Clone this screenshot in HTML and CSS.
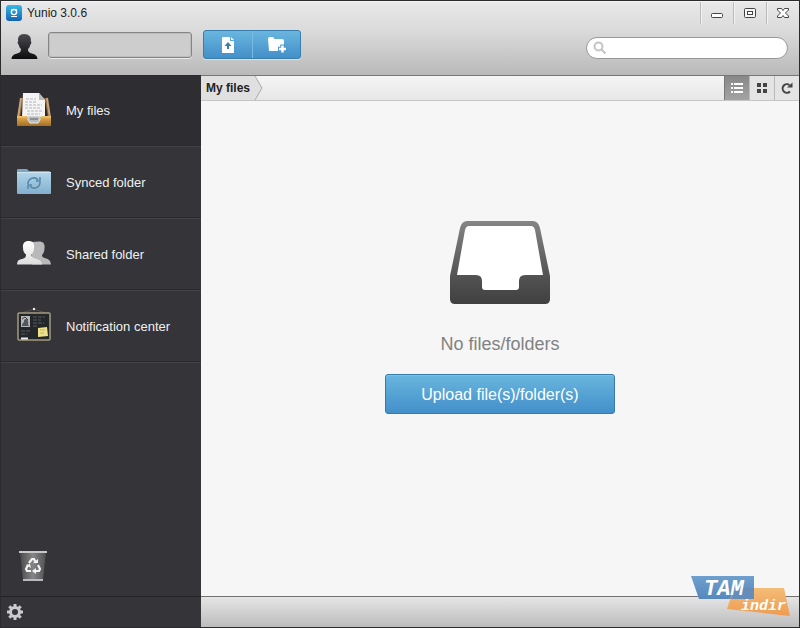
FILE: index.html
```html
<!DOCTYPE html>
<html lang="en">
<head>
<meta charset="utf-8">
<title>Yunio 3.0.6</title>
<link rel="stylesheet" href="styles.css">
</head>
<body>
<div class="window">
  <header class="header">
    <div class="titlebar">
      <svg class="app-logo" width="16" height="16" viewBox="0 0 16 16" aria-hidden="true">
        <defs><linearGradient id="logo" x2="0" y2="1"><stop offset="0" stop-color="#38b9e8"/><stop offset="1" stop-color="#1263b4"/></linearGradient></defs>
        <rect width="16" height="16" rx="3" fill="url(#logo)"/>
        <circle cx="8" cy="7" r="2.6" fill="none" stroke="#fff" stroke-width="1.4"/>
        <path d="M5 4.700h6M5 11.5h6" stroke="#fff" stroke-width="1.2"/>
      </svg>
      <h1 class="title">Yunio 3.0.6</h1>
      <div class="window-controls">
        <button type="button" aria-label="Minimize"><svg width="14" height="14" viewBox="0 0 14 14"><rect x="1.5" y="7.5" width="11" height="4" rx="1" fill="#fff" stroke="#444"/></svg></button>
        <button type="button" aria-label="Maximize"><svg width="14" height="14" viewBox="0 0 14 14"><rect x="1.5" y="2.5" width="11" height="9" rx="1" fill="#f4f4f4" stroke="#444"/><rect x="4.5" y="5.500" width="5" height="3" fill="#fff" stroke="#444"/></svg></button>
        <button type="button" aria-label="Close"><svg width="14" height="14" viewBox="0 0 14 14"><path d="M1.500 2.500h4L7 4.500l1.500-2h4V4L9.500 7l3 3v1.500h-4L7 9.500l-1.500 2h-4V10l3-3-3-3z" fill="#fff" stroke="#444"/></svg></button>
      </div>
    </div>
    <div class="toolbar">
      <svg class="avatar" width="27" height="27" viewBox="0 0 27 27" aria-hidden="true">
        <defs><linearGradient id="person" x2="0" y2="1"><stop offset="0" stop-color="#4a4a50"/><stop offset="1" stop-color="#0d0d10"/></linearGradient></defs>
        <path d="M13 1c5 0 7.500 3 6.800 7 1 1 .6 3-.6 4-.4 2-1.200 3-2.200 4 .2 3 1 3.500 4 4.500 3.500 1.200 5 2 5.500 5.500H.5c.5-3.500 2-4.300 5.500-5.500 3-1 3.800-1.500 4-4.500-1-1-1.800-2-2.200-4-1.200-1-1.600-3-.6-4C6.500 4 8.500 1 13 1z" fill="url(#person)"/>
      </svg>
      <input class="name-field" type="text" aria-label="User name">
      <div class="actions">
        <button type="button" aria-label="Upload file"><svg width="20" height="20" viewBox="0 0 20 20"><path d="M4 2h8v4h4v12H4z" fill="#fff"/><path d="M13 2l3 3h-3z" fill="#fff"/><path d="M10 7l3.500 4H11v3H9v-3H6.500z" fill="#3d7fac"/></svg></button>
        <button type="button" aria-label="New folder"><svg width="20" height="20" viewBox="0 0 20 20"><path d="M1 4q0-2 2-2h3l1.500 2H15q2 0 2 2v10H2z" fill="#fff"/><path d="M15.500 9.500v9M11 14h9" stroke="#4b98cb" stroke-width="4.500"/><path d="M15.500 10.500v7M12 14h7" stroke="#fff" stroke-width="2.400"/></svg></button>
      </div>
      <div class="search">
        <svg width="14" height="14" viewBox="0 0 14 14" aria-hidden="true"><circle cx="5.500" cy="5.500" r="4" fill="none" stroke="#c4c4c4" stroke-width="2"/><path d="M8.500 8.500l4 4" stroke="#c4c4c4" stroke-width="2"/></svg>
        <input type="search" aria-label="Search">
      </div>
    </div>
  </header>
  <div class="content">
    <aside class="sidebar">
      <nav class="nav">
        <a class="nav-item active" href="#files">
          <svg width="36" height="38" viewBox="0 0 36 38" aria-hidden="true">
            <defs><linearGradient id="wood" x2="0" y2="1"><stop offset="0" stop-color="#e9b258"/><stop offset="1" stop-color="#a56d20"/></linearGradient></defs>
            <path d="M5 6h26l4 20H1z" fill="#8b633a"/><path d="M7 9h22l3 17H4z" fill="#32251c"/>
            <path d="M5 6l-3 20M31 6l3 20" stroke="#c7a47c" stroke-width="2"/>
            <path d="M7 1h16l6 7v17H6z" fill="#f4f4f4"/><path d="M23 1v7h6z" fill="#b8babd"/>
            <path d="M10 7h10M9 10h11M9 13h17M9 16h15M11 19h15M11 22h13" stroke="#b4b7bb" stroke-dasharray="3 1"/>
            <path d="M1 24h10l2 5h10l2-5h10v10H1z" fill="url(#wood)"/>
            <path d="M12 24h12v4l-2 3h-8l-2-3z" fill="#b9bcc0" stroke="#e8e8e8"/><path d="M14 26h8v2h-8z" fill="#8b9095"/>
            <path d="M1 25h10M25 25h10" stroke="#f1ca7f"/>
          </svg>
          <span>My files</span>
        </a>
        <a class="nav-item" href="#synced">
          <svg width="36" height="38" viewBox="0 0 36 38" aria-hidden="true">
            <defs><linearGradient id="folder" x2="0" y2="1"><stop offset="0" stop-color="#b2d6eb"/><stop offset="1" stop-color="#83b0cd"/></linearGradient></defs>
            <path d="M1 7q0-1 1-1h9l2 2h20q1 0 1 1v7H1z" fill="#7aa6c1"/>
            <rect x="1" y="9" width="34" height="22" rx="1" fill="url(#folder)"/>
            <path d="M1 9.500h34" stroke="#cce5f2"/>
            <path d="M12 21c0-6 7-8 10-4M24 19c0 6-7 8-10 4" fill="none" stroke="#5888aa" stroke-width="1.600"/><path d="M20 18h4v-4M16 22h-4v4" fill="none" stroke="#5888aa" stroke-width="1.500"/>
          </svg>
          <span>Synced folder</span>
        </a>
        <a class="nav-item" href="#shared">
          <svg width="36" height="38" viewBox="0 0 36 38" aria-hidden="true">
            <defs><linearGradient id="people" x2="0" y2="1"><stop offset="0" stop-color="#fff"/><stop offset="1" stop-color="#ddd"/></linearGradient></defs>
            <path d="M23 6.500c5 0 6 3 5.500 7 0 3-1 5-2.500 6.500 0 2 1 2.500 4 3.500 3 .8 4.500 2 5 6H16V7z" fill="#b9b9b9"/>
            <path d="M12.500 6c5 0 6 3 5.500 7 0 3-1 5-2.500 6.500 0 3 1 3 5 4.500 3.500 1 5 2 5.500 5.500H1c.5-4 1.500-4.700 5-5.500 3-1 4-1.500 4-4.500C8 18 7 16 7 13c-.5-4 1-7 5.500-7z" fill="url(#people)"/>
          </svg>
          <span>Shared folder</span>
        </a>
        <a class="nav-item" href="#notifications">
          <svg width="36" height="38" viewBox="0 0 36 38" aria-hidden="true">
            <path d="M6 6l12-4 12 4" fill="none" stroke="#55504a"/><circle cx="18" cy="2" r="1.200" fill="#eee"/>
            <rect x="2" y="6" width="32" height="27" rx="1" fill="#24272a" stroke="#a29a80" stroke-width="1.500"/>
            <rect x="5" y="9" width="9" height="11" fill="#b4b7b9"/><path d="M6 19c0-3 2-3 2-5s3-3 4 0-1 2 1 5z" fill="#54585b"/><path d="M6 12l3-2 3 3" stroke="#444" fill="none"/>
            <path d="M17 10h12M17 13h8M17 16h11M17 19h5M5 24h9M5 27h6" stroke="#555c63" stroke-dasharray="4 1"/>
            <path d="M22 21l9-1 1 9-10 1z" fill="#eee18a"/><path d="M24 23h5M24 26h4" stroke="#c0b566"/><path d="M5 31.500h7" stroke="#eee" stroke-width="2"/>
          </svg>
          <span>Notification center</span>
        </a>
      </nav>
      <a class="trash" href="#trash" aria-label="Trash">
        <svg width="30" height="34" viewBox="0 0 30 34" aria-hidden="true">
          <defs><linearGradient id="bin"><stop offset="0" stop-color="#4b4b4d"/><stop offset=".5" stop-color="#858587"/><stop offset="1" stop-color="#505052"/></linearGradient></defs>
          <path d="M2 3h26l-3 28H5z" fill="url(#bin)"/><path d="M1 3h28" stroke="#c9c9c9" stroke-width="2"/><path d="M5 31h20" stroke="#bbb" stroke-width="2"/>
          <path d="M11 14l3-4h2l2 4M20 16l2 4-1 2h-4M13 22H9l-1-2 2-4" fill="none" stroke="#f3f3f3" stroke-width="2.200"/><path d="M15 14h5v-4zM18 19v6l-4-3zM8 16l4-1 1 4z" fill="#f3f3f3"/>
        </svg>
      </a>
      <div class="sidebar-footer">
        <button type="button" aria-label="Settings">
          <svg width="18" height="18" viewBox="-9 -9 18 18"><circle r="4.500" fill="none" stroke="#cbcbcd" stroke-width="3"/><path d="M0-8v3M0 5v3M-8 0h3M5 0h3M-5.700-5.700l2 2M3.700 3.700l2 2M-5.700 5.700l2-2M3.700-3.700l2-2" stroke="#cbcbcd" stroke-width="3"/></svg>
        </button>
      </div>
    </aside>
    <main class="main">
      <div class="pathbar">
        <a class="crumb" href="#files">My files</a>
        <svg class="crumb-arrow" width="10" height="24" viewBox="0 0 10 24" aria-hidden="true"><path d="M0 0h1l7 12-7 12H0z" fill="#e0e0e0"/><path d="M1 0l7 12-7 12" fill="none" stroke="#aaa"/></svg>
        <div class="views">
          <button class="selected" type="button" aria-label="List view"><svg width="14" height="14" viewBox="0 0 14 14"><path d="M1 3h2M4 3h9M1 7h2M4 7h9M1 11h2M4 11h9" stroke="#fff" stroke-width="2"/></svg></button>
          <button type="button" aria-label="Grid view"><svg width="14" height="14" viewBox="0 0 14 14"><path d="M2 2h4v4H2zM8 2h4v4H8zM2 8h4v4H2zM8 8h4v4H8z" fill="#444"/></svg></button>
          <button type="button" aria-label="Refresh"><svg width="14" height="14" viewBox="0 0 14 14"><path d="M10 10.500A4.300 4.300 0 1 1 9.500 4" fill="none" stroke="#444" stroke-width="2"/><path d="M7 6.500h5.500V1.500z" fill="#444"/></svg></button>
        </div>
      </div>
      <section class="empty">
        <svg width="100" height="83" viewBox="0 0 100 83" aria-hidden="true">
          <defs><linearGradient id="tray" x2="0" y2="1"><stop offset="0" stop-color="#858585"/><stop offset=".7" stop-color="#505050"/><stop offset="1" stop-color="#404040"/></linearGradient></defs>
          <path d="M17 0h66q5 0 7 7l10 48v23q0 5-5 5H5q-5 0-5-5V55L10 7q2-7 7-7z" fill="url(#tray)"/>
          <path d="M19 5h62q3 0 4 4l8 45H75q-6 0-6 6v6q0 3-3 3H35q-3 0-3-3v-6q0-6-6-6H7L15 9q1-4 4-4z" fill="#fff"/>
        </svg>
        <p class="message">No files/folders</p>
        <button class="upload" type="button">Upload file(s)/folder(s)</button>
      </section>
      <footer class="statusbar"></footer>
      <svg class="watermark" width="100" height="42" viewBox="0 0 100 42" role="img" aria-label="TAM indir">
        <defs><linearGradient id="blue" x2="0" y2="1"><stop offset="0" stop-color="#6f9fcd"/><stop offset="1" stop-color="#5788bd"/></linearGradient><linearGradient id="orange" x2="0" y2="1"><stop offset="0" stop-color="#f4bd78"/><stop offset="1" stop-color="#ee9b50"/></linearGradient></defs>
        <path d="M0 1h63v23H8z" fill="url(#blue)"/><path d="M43 13h50l6 28-63-7z" fill="url(#orange)"/>
        <path d="M43 13h20v11H40z" fill="#648dba"/>
        <text class="mark-large" x="13" y="20">TAM</text><text class="mark-small" x="50" y="35">indir</text>
      </svg>
    </main>
  </div>
</div>
</body>
</html>
```
FILE: styles.css
```css
* { box-sizing: border-box; }
body { margin: 0; font-family: "Liberation Sans", Arial, sans-serif; font-size: 13px; color: #222; }
button { padding: 0; border: 0; background: none; font: inherit; color: inherit; }
svg { display: block; flex: none; }
a { color: inherit; text-decoration: none; }

.window { display: flex; flex-direction: column; min-height: 100vh; border: 1px solid #2b2b2e; }
.header { background: linear-gradient(#e9e9e9, #dadada 40%, #b9b9b9); height: 74px; border-top: 1px solid #f5f5f5; }
.titlebar { display: flex; align-items: center; height: 22px; padding-left: 5px; gap: 5px; }
.title { flex: 1; margin: 0; font-size: 12px; font-weight: 400; }
.window-controls { display: flex; align-self: stretch; }
.window-controls button { display: grid; place-items: center; width: 33px; border-left: 1px solid #bbb; box-shadow: inset 1px 0 #f2f2f2; }

.toolbar { display: flex; align-items: center; height: 41px; padding: 0 11px 0 10px; }
.avatar { margin-top: 4px; }
.name-field { width: 144px; height: 26px; margin-left: 10px; padding: 0 6px; border: 1px solid #858585; border-radius: 3px; outline: 1px solid #bdbdbd; outline-offset: -2px; background: #cdcdcd; font: inherit; box-shadow: 0 1px #e8e8e8; }
.actions { display: flex; margin-left: 11px; border: 1px solid #387eab; border-radius: 3px; background: linear-gradient(#6ab6e0, #438fc8); box-shadow: 0 1px #dedede; }
.actions button { display: grid; place-items: center; width: 48px; height: 27px; }
.actions button + button { border-left: 1px solid #77bbe2; }
.search { display: flex; align-items: center; width: 202px; height: 22px; margin: 6px 0 0 auto; padding: 0 8px 0 6px; gap: 4px; border: 1px solid #999; border-radius: 11px; background: #fff; }
.search input { flex: 1; min-width: 0; border: 0; outline: 0; background: none; font: inherit; }

.content { display: flex; flex: 1; }
.sidebar { display: flex; flex-direction: column; width: 200px; background: #343439; color: #f0f0f0; }
.nav-item { display: flex; align-items: center; gap: 14px; height: 72px; padding-left: 15px; border-top: 1px solid #434348; border-bottom: 1px solid #29292d; }
.nav-item.active { height: 71px; background: #2e2e32; border-top-color: #29292d; }
.nav { border-bottom: 1px solid #434348; }
.trash { margin: auto 0 13px 17px; width: 30px; }
.sidebar-footer { display: flex; align-items: center; height: 31px; padding-left: 5px; border-top: 1px solid #222225; }

.main { position: relative; display: flex; flex: 1; flex-direction: column; min-width: 0; background: #f6f6f6; }
.pathbar { display: flex; height: 26px; border-top: 1px solid #777; border-bottom: 1px solid #c5c5c5; background: linear-gradient(#f5f5f5, #e7e7e7); }
.crumb { display: flex; align-items: center; padding: 0 4px 0 5px; background: #e0e0e0; font-size: 12px; font-weight: 700; }
.views { display: flex; margin-left: auto; }
.views button { display: grid; place-items: center; width: 25px; border-left: 1px solid #bbb; background: #e4e4e4; }
.views .selected { border-left-color: #777; background: linear-gradient(#888, #a3a3a3); }
.empty { display: flex; flex: 1; flex-direction: column; align-items: center; justify-content: center; padding-bottom: 63px; }
.message { margin: 30px 0 19px; color: #828282; font-size: 18px; line-height: 21px; }
.upload { width: 230px; height: 40px; padding-top: 3px; border: 1px solid #367ba9; border-radius: 3px; background: linear-gradient(#69b6df, #438fca); color: #fff; font-size: 16px; box-shadow: inset 0 1px #7cc1e5; }
.statusbar { height: 31px; border-top: 1px solid #737373; background: linear-gradient(#e5e5e5, #bcbcbc); }
.watermark { position: absolute; right: 8px; bottom: 10px; }
.mark-large, .mark-small { fill: #fff; font-family: "Liberation Mono", monospace; font-style: italic; font-weight: 700; }
.mark-large { font-size: 22px; }
.mark-small { font-size: 15px; }
```
